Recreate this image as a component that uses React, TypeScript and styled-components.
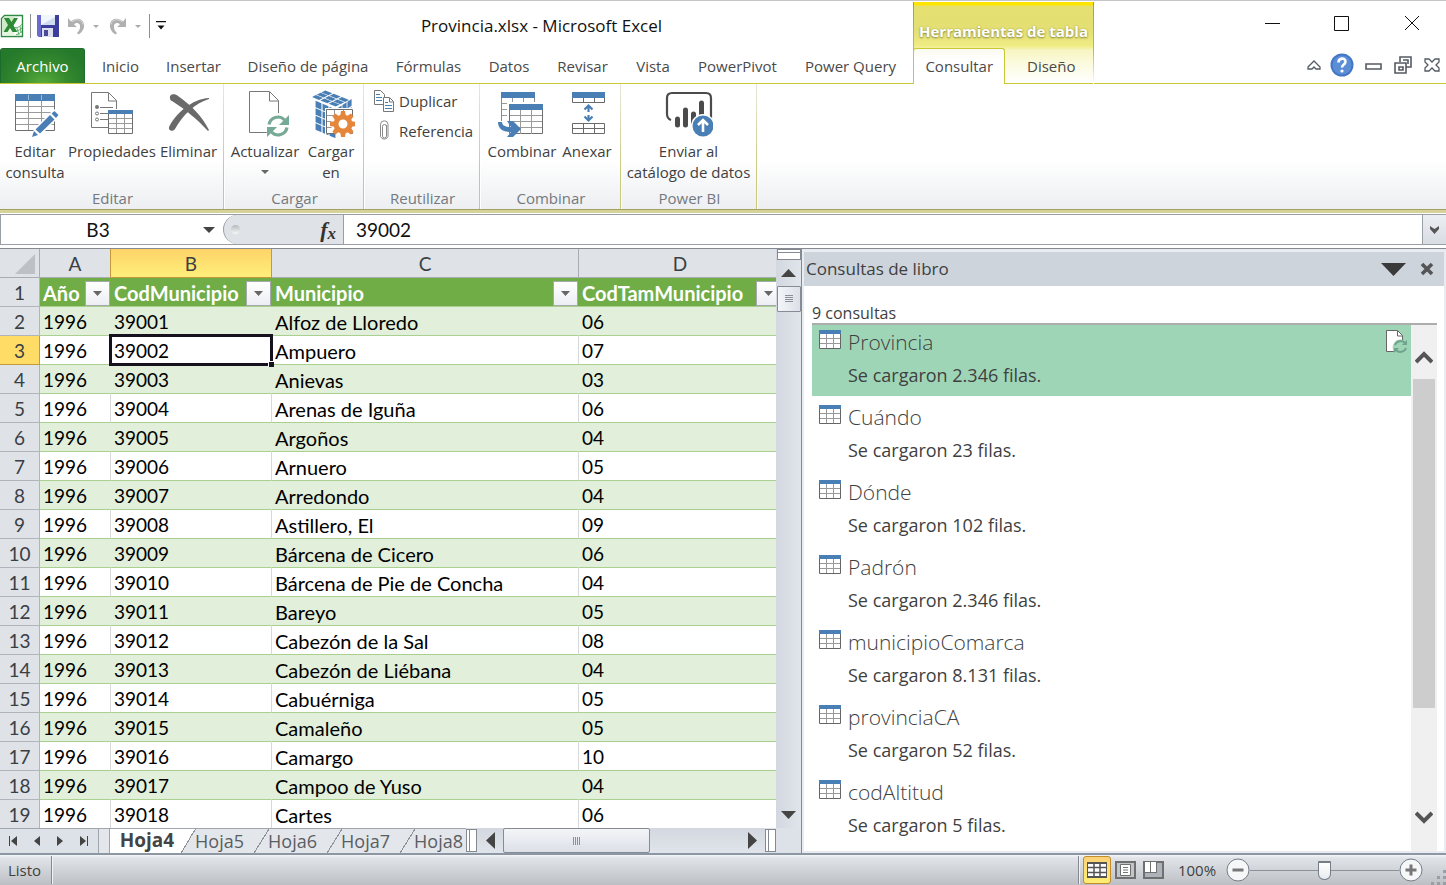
import React from "react";
import styled, { createGlobalStyle, css } from "styled-components";

const UI = `"Open Sans", "Noto Sans", sans-serif`;
const SHEET = `Lato, "Open Sans", sans-serif`;
const BLUE = "#4a7fb5";
const INK = "#3f3f3f";
const OLIVE = "#c8c832";

const GlobalStyle = createGlobalStyle`
  *, *::before, *::after { box-sizing: border-box; }
  body { margin: 0; background: #fff; font-family: ${UI}; color: ${INK}; overflow: hidden; }
  button, input { font: inherit; color: inherit; border: 0; background: none; padding: 0; margin: 0; outline: 0; }
  svg { display: block; flex: none; }
`;

const Window = styled.div`
  display: flex;
  flex-direction: column;
  height: 100vh;
  border-top: 1px solid #c6c6c8;
`;

/* ---------- title bar and tabs ---------- */

const Header = styled.header`
  display: flex;
  height: 83px;
  flex: none;
`;

const HeaderMain = styled.div`
  display: flex;
  flex-direction: column;
  width: 913px;
  flex: none;
`;

const TitleRow = styled.div`
  display: flex;
  align-items: center;
  height: 47px;
  padding-top: 3px;
`;

const QuickAccess = styled.div`
  display: flex;
  align-items: center;
  width: 170px;
  gap: 6px;
`;

const QuickButton = styled.button<{ $pad?: number }>`
  display: flex;
  align-items: center;
  gap: 8px;
  padding: 0 ${(p) => p.$pad ?? 0}px;
`;

const QuickDivider = styled.span`
  width: 1px;
  height: 24px;
  background: #8f8f8f;
`;

const WindowTitle = styled.h1`
  flex: 1;
  margin: 0;
  text-align: center;
  font-size: 17px;
  line-height: 24px;
  font-weight: 400;
  color: #111;
  white-space: pre;
`;

const TabRow = styled.nav`
  display: flex;
  height: 36px;
  border-bottom: 1px solid ${OLIVE};
`;

const RibbonTab = styled.button<{ $w: number }>`
  width: ${(p) => p.$w}px;
  font-size: 15px;
  line-height: 20px;
  white-space: nowrap;
  color: #4a4a4a;
`;

const FileTab = styled(RibbonTab)`
  color: #fff;
  margin-right: 3px;
  border: 1px solid #1b6b2c;
  border-bottom: 0;
  border-radius: 3px 3px 0 0;
  background: radial-gradient(ellipse at 50% 110%, #5cb03c 0%, #35892e 45%, #25792b 80%);
`;

const ContextGroup = styled.div`
  display: flex;
  flex-direction: column;
  width: 181px;
  flex: none;
  margin-top: 1px;
  border: solid;
  border-width: 0 1px;
  border-image: linear-gradient(#a8a02c, #c4bc40 60%, #fff) 1;
  background: linear-gradient(#ffe400 0, #ffe400 3px, #e5e070 4px, #e3df74 28px, #efec84 44px, #f7f5c0 48px, #fbfadc 60px, #fff 81px);
`;

const ContextTitle = styled.div`
  height: 46px;
  padding-top: 18px;
  text-align: center;
  font-size: 15px;
  line-height: 22px;
  font-weight: 700;
  color: #fff;
  white-space: nowrap;
  text-shadow: 0 1px 2px #8d8a3c, 0 0 2px #b5b158;
`;

const ContextTabs = styled.div`
  display: flex;
  flex: 1;
`;

const ActiveTab = styled(RibbonTab)`
  margin-left: -1px;
  padding-bottom: 2px;
  border: 1px solid ${OLIVE};
  border-bottom: 0;
  border-radius: 3px 3px 0 0;
  background: linear-gradient(#fbfaf0, #fff 12px);
`;

const ContextTab = styled(RibbonTab)`
  padding-left: 4px;
  border-bottom: 1px solid ${OLIVE};
`;

const HeaderSide = styled.div`
  display: flex;
  flex-direction: column;
  flex: 1;
`;

const WindowButtons = styled.div`
  display: flex;
  justify-content: flex-end;
  gap: 54px;
  height: 47px;
  padding: 14px 26px 0 0;
`;

const HelpRow = styled.div`
  display: flex;
  align-items: center;
  justify-content: flex-end;
  gap: 9px;
  height: 36px;
  padding: 0 4px 2px 0;
  border-bottom: 1px solid ${OLIVE};
`;

/* ---------- ribbon ---------- */

const Ribbon = styled.section`
  display: flex;
  height: 129px;
  flex: none;
  border-bottom: 3px solid #d5d39a;
  box-shadow: inset 0 -1px #a3a162;
  background: linear-gradient(#fff 60%, #eceef1 100%);
`;

const Group = styled.div<{ $w: number }>`
  display: flex;
  flex-direction: column;
  width: ${(p) => p.$w}px;
  margin-bottom: 1px;
  border-right: 1px solid;
  border-image: linear-gradient(#e8e8de, #c9cb7c 70%) 1;
  box-shadow: 1px 0 #fff;
`;

const GroupBody = styled.div<{ $pad?: number }>`
  display: flex;
  flex: 1;
  align-items: flex-start;
  padding: 6px 0 0 ${(p) => p.$pad ?? 0}px;
`;

const GroupName = styled.div`
  padding-left: 2px;
  text-align: center;
  font-size: 15px;
  line-height: 20px;
  height: 21px;
  color: #74797f;
`;

const BigButton = styled.button<{ $w: number }>`
  display: flex;
  flex-direction: column;
  align-items: center;
  width: ${(p) => p.$w}px;
  font-size: 15px;
  line-height: 21px;
  white-space: nowrap;
`;

const BigLabel = styled.span`
  display: block;
  margin-top: 3px;
  text-align: center;
`;

const DropMark = styled.span`
  margin-top: 8px;
  border: 4px solid transparent;
  border-top-color: #666;
  border-bottom: 0;
`;

const SmallList = styled.div`
  display: flex;
  flex-direction: column;
  gap: 8px;
`;

const SmallButton = styled.button`
  display: flex;
  align-items: center;
  gap: 4px;
  height: 22px;
  font-size: 15px;
  line-height: 20px;
`;

/* ---------- formula bar ---------- */

const FormulaBar = styled.div`
  display: flex;
  flex: none;
  height: 31px;
  margin-top: 1px;
  border: 1px solid #9a9ea5;
  border-right: 0;
  background: #fff;
  font-family: ${SHEET};
  font-size: 19px;
  color: #111;
`;

const NameBox = styled.input`
  width: 194px;
  padding-bottom: 1px;
  text-align: center;
`;

const NameArrow = styled.button`
  width: 28px;
  display: grid;
  place-items: center;
`;

const FxZone = styled.div`
  display: flex;
  align-items: center;
  justify-content: space-between;
  width: 121px;
  padding: 0 7px;
  border: 1px solid #9a9ea5;
  border-width: 0 1px;
  border-radius: 15px 0 0 15px;
  background: #dfe3e8;
`;

const FxKnob = styled.span`
  width: 9px;
  height: 9px;
  border-radius: 50%;
  background: linear-gradient(#b4b8be, #f8f8f8);
`;

const FxButton = styled.button`
  font-family: "Liberation Serif", serif;
  font-style: italic;
  font-weight: 700;
  font-size: 22px;
  line-height: 28px;
  color: #333;

  sub { font-size: 17px; line-height: 12px; vertical-align: -2px; }
`;

const FormulaInput = styled.input`
  flex: 1;
  padding: 0 0 1px 12px;
`;

const ExpandButton = styled.button`
  display: grid;
  place-items: center;
  width: 24px;
  border-left: 1px solid #9a9ea5;
  background: linear-gradient(#eceff3, #d8dce3);
`;

/* ---------- work area ---------- */

const WorkArea = styled.main`
  display: flex;
  flex: 1;
  min-height: 0;
  margin-top: 3px;
  border-top: 1px solid #868b93;
  border-bottom: 2px solid #8d96a3;
  background: #e3e7ed;
`;

const SheetPane = styled.section`
  display: flex;
  flex-direction: column;
  flex: 1;
  min-width: 0;
`;

const SheetTop = styled.div`
  display: flex;
  flex: 1;
  min-height: 0;
`;

const GridClip = styled.div`
  flex: 1;
  min-width: 0;
  overflow: hidden;
  background: #fff;
`;

const Grid = styled.table`
  width: 782px;
  table-layout: fixed;
  border-collapse: separate;
  border-spacing: 0;
  font-family: ${SHEET};
  font-size: 19px;
  line-height: 26px;
  color: #000;

  th, td { height: 29px; padding: 2px 0 0; white-space: nowrap; }
`;

const goldHead = css`
  background: linear-gradient(#fdd367, #ffef7a);
  border-color: #c69a3c;
  box-shadow: -1px 0 #c69a3c;
`;

const ColHead = styled.th<{ $on?: boolean }>`
  font-weight: 400;
  color: #3a3f45;
  background: #dfe2e7;
  border: solid #a9adb3;
  border-width: 0 1px 1px 0;
  ${(p) => p.$on && goldHead}
`;

const Corner = styled(ColHead)`
  svg { margin-left: 15px; }
`;

const RowHead = styled.th<{ $on?: boolean }>`
  font-weight: 400;
  color: #3a3f45;
  background: ${(p) => (p.$on ? "#ffdc66" : "#dfe2e7")};
  border: solid ${(p) => (p.$on ? "#c69a3c" : "#b1b5bb")};
  border-width: 0 1px 1px 0;
`;

const FieldHead = styled.th`
  background: #70ad47;
  border-bottom: 1px solid #a9d08e;
  color: #fff;
  text-align: left;
  font-size: 20px;
`;

const FieldInner = styled.div`
  display: flex;
  align-items: center;
  justify-content: space-between;
  height: 26px;
  padding: 0 1px 0 3px;
`;

const FilterButton = styled.button`
  display: grid;
  place-items: center;
  width: 25px;
  height: 25px;
  border: 1px solid #a5a9ad;
  background: linear-gradient(#fff, #eceef3);
`;

const Cell = styled.td<{ $band?: boolean; $text?: boolean }>`
  position: relative;
  font-size: ${(p) => (p.$text ? 20 : 19)}px;
  background: ${(p) => (p.$band ? "#e2efda" : "#fff")};
  border-bottom: 1px solid #a9d08e;
  border-right: 1px solid ${(p) => (p.$band ? "#e2efda" : "#d6d8da")};

  && { padding-left: 3px; }
`;

const Selection = styled.span`
  position: absolute;
  inset: -2px;
  border: 3px solid #17101f;
  z-index: 1;

  &::after {
    content: "";
    position: absolute;
    right: -4px;
    bottom: -4px;
    width: 6px;
    height: 6px;
    background: #17101f;
    border: solid #fff;
    border-width: 1px 0 0 1px;
  }
`;

const VScroll = styled.div`
  display: flex;
  flex-direction: column;
  align-items: center;
  justify-content: space-between;
  width: 25px;
  background: linear-gradient(90deg, #d3d8e0, #e0e4eb);
`;

const VScrollTop = styled.div`
  display: flex;
  flex-direction: column;
  align-items: center;
`;

const SplitHandle = styled.div`
  width: 24px;
  height: 11px;
  border: 1px solid #858990;
  background: #fff;
  box-shadow: inset 0 2px #fff, inset 0 3px #858990;
`;

const ScrollArrow = styled.button<{ $h: number }>`
  display: grid;
  place-items: center;
  width: 24px;
  height: ${(p) => p.$h}px;
`;

const VThumb = styled.div`
  display: grid;
  place-items: center;
  width: 24px;
  height: 26px;
  border: 1px solid #858c96;
  border-radius: 1px;
  background: linear-gradient(90deg, #f3f5f8, #dce0e7);
`;

const SheetBottom = styled.div`
  display: flex;
  flex: none;
  height: 25px;
  background: #dde1e8;
`;

const SheetNav = styled.div`
  display: flex;
  align-items: center;
  gap: 14px;
  width: 99px;
  padding-left: 8px;
  border-top: 1px solid #a0a5ad;
  border-right: 1px solid #a0a5ad;
`;

const SheetTabs = styled.div`
  display: flex;
  width: 367px;
  padding-left: 10px;
  overflow: hidden;
  border-top: 1px solid #a0a5ad;
  background: #e3e6ea;
`;

const SheetTab = styled.button<{ $on?: boolean }>`
  position: relative;
  flex: none;
  width: ${(p) => (p.$on ? 79 : 73)}px;
  margin-top: ${(p) => (p.$on ? -1 : 0)}px;
  padding: 0 ${(p) => (p.$on ? 4 : 10)}px 1px 0;
  text-align: center;
  font-size: ${(p) => (p.$on ? 19 : 18)}px;
  line-height: 22px;
  font-weight: ${(p) => (p.$on ? 700 : 400)};
  color: ${(p) => (p.$on ? "#444" : "#5a5e63")};
  ${(p) => p.$on && "background: #fff; border-left: 1px solid #a0a5ad;"}

  &::after {
    content: "";
    position: absolute;
    inset: 0 -8px 0 auto;
    width: 15px;
    background: linear-gradient(to bottom right, ${(p) => (p.$on ? "#fff" : "#e3e6ea")} 48%, #8d9299 48%, #8d9299 52%, #e3e6ea 52%);
  }
`;

const SheetTabText = styled.span`
  position: relative;
  z-index: 1;
`;

const SplitGrip = styled.span`
  width: 11px;
  margin: 1px 0;
  border: 1px solid #858990;
  background: #fff;
  box-shadow: inset 2px 0 #fff, inset 3px 0 #858990;
`;

const HScroll = styled.div`
  display: flex;
  flex: 1;
  align-items: stretch;
  justify-content: space-between;
  background: linear-gradient(#d3d8e0, #e0e4eb);
`;

const HArrow = styled.button`
  display: grid;
  place-items: center;
  width: 26px;
`;

const HTrack = styled.div`
  flex: 1;
`;

const HThumb = styled.div`
  display: grid;
  place-items: center;
  width: 147px;
  height: 25px;
  border: 1px solid #858c96;
  border-radius: 2px;
  background: linear-gradient(#f3f5f8, #dce0e7);
`;

const HEnd = styled.div`
  width: 25px;
`;

/* ---------- queries pane ---------- */

const QueriesPane = styled.aside`
  display: flex;
  flex-direction: column;
  width: 645px;
  flex: none;
  padding: 3px 2px 2px;
  border-left: 1px solid #858b95;
  background: #e8ebf0;
`;

const PaneHead = styled.div`
  display: flex;
  align-items: center;
  gap: 14px;
  height: 34px;
  flex: none;
  padding: 0 10px 0 2px;
  background: #cdd4dc;
`;

const PaneTitle = styled.h2`
  flex: 1;
  margin: 0;
  font-size: 17px;
  line-height: 24px;
  font-weight: 400;
`;

const PaneBody = styled.div`
  display: flex;
  flex-direction: column;
  flex: 1;
  min-height: 0;
  padding: 16px 7px 0 8px;
  background: #fff;
`;

const QueryCount = styled.p`
  margin: 0;
  height: 21px;
  font-size: 16px;
  line-height: 22px;
`;

const QueryArea = styled.div`
  display: flex;
  flex: 1;
  min-height: 0;
  border-top: 2px solid #adadad;
`;

const QueryList = styled.ul`
  flex: 1;
  margin: 0;
  padding: 0;
  list-style: none;
  overflow: hidden;
`;

const QueryItem = styled.li<{ $on?: boolean }>`
  display: flex;
  align-items: flex-start;
  gap: 7px;
  height: 71px;
  margin-bottom: 4px;
  padding: 5px 3px 0 7px;
  background: ${(p) => (p.$on ? "#9fd5b7" : "transparent")};
`;

const QueryText = styled.div`
  flex: 1;
  margin-top: -4px;
`;

const QueryName = styled.div`
  font-size: 21px;
  line-height: 32px;
  font-weight: 300;
`;

const QueryStatus = styled.div`
  font-size: 18px;
  line-height: 34px;
`;

const PaneScroll = styled.div`
  display: flex;
  flex-direction: column;
  width: 26px;
  background: #f0f0f0;
`;

const PaneScrollButton = styled.button<{ $h: number; $top?: number }>`
  display: grid;
  place-items: center;
  height: ${(p) => p.$h}px;
  padding-top: ${(p) => p.$top ?? 0}px;
  flex: none;
`;

const PaneTrack = styled.div`
  flex: 1;
  padding: 0 2px;
`;

const PaneThumb = styled.div`
  height: 81%;
  background: #cdcdcd;
`;

/* ---------- status bar ---------- */

const StatusBar = styled.footer`
  display: flex;
  align-items: center;
  flex: none;
  height: 30px;
  padding-left: 8px;
  font-size: 15px;
  line-height: 20px;
  background: linear-gradient(#f4f6f8 0, #e0e3e7 3px, #bcc0c5 100%);
`;

const StatusDivider = styled.span`
  width: 2px;
  height: 28px;
  border-left: 1px solid #85898f;
  background: #f2f3f5;
`;

const StatusText = styled.span`
  width: 43px;
`;

const StatusSpace = styled.span`
  flex: 1;
`;

const ViewButton = styled.button<{ $on?: boolean }>`
  display: grid;
  place-items: center;
  width: 28px;
  height: 28px;
  border-radius: 3px;
  ${(p) => p.$on && "margin-left: 3px; border: 1px solid #c48a2c; background: linear-gradient(#fbd277, #ffed72);"}
`;

const ZoomValue = styled.button`
  width: 59px;
  padding-left: 1px;
  text-align: center;
`;

const ZoomRange = styled.input`
  appearance: none;
  width: 149px;
  height: 22px;
  background: linear-gradient(#8b9199, #8b9199) center / 100% 1px no-repeat;

  &::-webkit-slider-thumb {
    appearance: none;
    width: 13px;
    height: 19px;
    border: 1px solid #747d88;
    border-top-width: 2px;
    border-radius: 1px 1px 6px 6px;
    background: linear-gradient(#fff, #e8ebef);
  }
`;

const SizeGrip = styled.span`
  width: 23px;
  height: 30px;
  display: flex;
  align-items: flex-end;
  justify-content: flex-end;
`;

/* ---------- icons ---------- */

const Tri = ({ dir, w, h, fill = "#444" }: { dir: "up" | "down" | "left" | "right"; w: number; h: number; fill?: string }) => {
  const points = {
    up: `0,${h} ${w},${h} ${w / 2},0`,
    down: `0,0 ${w},0 ${w / 2},${h}`,
    left: `${w},0 ${w},${h} 0,${h / 2}`,
    right: `0,0 0,${h} ${w},${h / 2}`,
  }[dir];
  return (
    <svg width={w} height={h} aria-hidden="true">
      <polygon points={points} fill={fill} />
    </svg>
  );
};

const ExcelIcon = () => (
  <svg width="24" height="24" viewBox="0 0 24 24">
    <path d="M4.500 1.500H22.500v21h-21v-18z" fill="#fff" stroke="#2f8a45" strokeWidth="1.400" />
    <path d="M2.500 5l2.500-2.500h10L13 14 2.500 18z" fill="#cdebc4" />
    <path d="M2.500 21.500V18L13 15l2 6.500z" fill="#e6f5e0" />
    <path d="M4 4h5l2.500 4L14 4h4l-4.500 7.500 4 6.500h-5L10 14l-2.500 4H3.500l4.500-7z" fill="#2f8a37" />
    <path d="M15 13.500c3 1 5-2 7-3M16 17c3 0 4-2 6-3M16 20.500c3 0 4-2 6-3M17 14l2 7M20 12l1 7" stroke="#5fb069" fill="none" />
  </svg>
);

const SaveIcon = () => (
  <svg width="22" height="22" viewBox="0 0 22 22">
    <path d="M0 0h22v22H2l-2-2z" fill="#3d3d9c" />
    <path d="M0 0h4v22H2l-2-2z" fill="#6a6ad0" />
    <rect x="4" y="0" width="14" height="10" fill="#f1f5fc" />
    <path d="M4 10L18 2v8z" fill="#cfdcf0" />
    <rect x="5" y="13" width="11" height="9" fill="#dcdff0" />
    <rect x="7" y="15" width="4" height="6" fill="#4a4a96" />
  </svg>
);

const UndoIcon = ({ flip }: { flip?: boolean }) => (
  <svg width="18" height="18" viewBox="0 0 18 18">
    <g transform={flip ? "matrix(-1 0 0 1 18 0)" : undefined}>
      <path d="M1 1v9h9L7 7.500c2.500-2.500 5.500-1.500 6 1 .5 3-1 5.500-3 7.500l1.500 1.500C15.500 15 17.500 11.500 17 7.500 16 1 9 0 4 4.500z" fill="#b0b0b0" />
      <path d="M5 4.800C9 1.500 15 2 16 7.500" fill="none" stroke="#d8d8d8" />
    </g>
  </svg>
);

const CustomizeIcon = () => (
  <svg width="10" height="10" viewBox="0 0 10 10">
    <path d="M0 .5h10" stroke="#111" strokeWidth="1.500" />
    <path d="M1.500 4.500h7L5 8.500z" fill="#111" />
  </svg>
);

const EditIcon = () => (
  <svg width="48" height="48" viewBox="0 0 48 48" fill="none">
    <path d="M4.500 4.500h39v36h-39z" fill="#fff" stroke="#6e6e6e" />
    <path d="M5 16.500h38M5 22.500h38M5 28.500h38M5 34.500h38M17.500 10v30M30.500 10v30" stroke="#9a9a9a" />
    <path d="M4 4h40v7H4z" fill={BLUE} />
    <path d="M17.500 5v5M30.500 5v5" stroke="#9bbbd9" />
    <path d="M20 48l3-9L43 19l7 6-20 20z" fill="#fff" />
    <path d="M21 47l2-6 4 4zM24.500 39.500L39 25l4.500 4.500L29 43.500zM40.500 23.500l3-2.500 4 4-2.500 3z" fill={BLUE} />
  </svg>
);

const PropertiesIcon = () => (
  <svg width="48" height="48" viewBox="0 0 48 48" fill="none">
    <path d="M20 37.500H3.500v-35h17l8 8V19M20.500 3v8h8" stroke="#777" />
    <path d="M12 17.500h13M12 23.500h8M12 29.500h8" stroke="#777" />
    <circle cx="9" cy="17" r="2" fill="#777" />
    <circle cx="9" cy="23.500" r="1.500" stroke="#777" />
    <circle cx="9" cy="29.500" r="1.500" stroke="#777" />
    <path d="M20.500 20.500h24v23h-24z" fill="#fff" stroke="#6e6e6e" />
    <path d="M21 28.500h23M21 33.500h23M21 38.500h23M28.500 24v19M36.500 24v19" stroke="#9a9a9a" />
    <path d="M20 20h25v4H20z" fill={BLUE} />
  </svg>
);

const DeleteIcon = () => (
  <svg width="48" height="48" viewBox="0 0 48 48" fill="#6a6a6a">
    <path d="M5 8c-1-4 5-5 8-2 13 9 24 20 31 34l-1 1C33 30 20 19 7 11c-1 0-2-1-2-3z" />
    <path d="M4 37c-1 4 4 5 6 2C17 26 30 13 44 9V8C27 9 11 23 4 37z" />
  </svg>
);

const Refresh = ({ x, y, s }: { x: number; y: number; s: number }) => (
  <g transform={`translate(${x} ${y}) scale(${s})`}>
    <circle r="13" fill="#fff" />
    <path d="M-9-1.500A9 9 0 0 1 6.500-6M9 1.500A9 9 0 0 1-6.500 6" fill="none" stroke="#76a996" strokeWidth="3.200" />
    <path d="M11-11v10H1zM-11 11V1h10z" fill="#76a996" />
  </g>
);

const RefreshPageIcon = () => (
  <svg width="48" height="48" viewBox="0 0 48 48" fill="none">
    <path d="M8.500 1.500h20l9 9v32h-29z" fill="#fff" stroke="#777" />
    <path d="M28.500 2v9h9" stroke="#777" />
    <Refresh x={37} y={36} s={1} />
  </svg>
);

type Pt = [number, number];

/* One face of the cube: a parallelogram (origin plus two edges) cut into tiles. */
const Face = ({ o, u, v, cols, rows }: { o: Pt; u: Pt; v: Pt; cols: number; rows: number }) => {
  const at = (a: number, b: number) => `${o[0] + u[0] * a + v[0] * b},${o[1] + u[1] * a + v[1] * b}`;
  const tiles = [];
  for (let i = 0; i < cols; i++) {
    for (let j = 0; j < rows; j++) {
      const [a0, a1, b0, b1] = [(i + 0.08) / cols, (i + 0.92) / cols, (j + 0.08) / rows, (j + 0.92) / rows];
      tiles.push(<polygon key={`${i}-${j}`} points={[at(a0, b0), at(a1, b0), at(a1, b1), at(a0, b1)].join(" ")} fill={BLUE} />);
    }
  }
  return <>{tiles}</>;
};

const gearTeeth = [0, 45, 90, 135, 180, 225, 270, 315];

const LoadIcon = () => (
  <svg width="48" height="48" viewBox="0 0 48 48" fill="none">
    <Face o={[4, 7]} u={[14, -7]} v={[25, 10]} cols={3} rows={3} />
    <Face o={[8, 10]} u={[21, 9]} v={[0, 30]} cols={3} rows={4} />
    <Face o={[30, 18]} u={[15, -10]} v={[0, 24]} cols={3} rows={3} />
    <path d="M18 18h28v26H18z" fill="#fff" />
    <path d="M19.500 19.500h26v24h-26z" fill="#fff" stroke="#6e6e6e" />
    <path d="M20 25.500h25M20 31.500h25M20 37.500h25M27.500 20v23M36.500 20v23" stroke="#9a9a9a" />
    <circle cx="36" cy="34" r="12" fill="#fff" />
    <g fill="#e5863d">
      {gearTeeth.map((a) => (
        <path key={a} d="M33 27l1-6h4l1 6z" transform={`rotate(${a} 36 34)`} />
      ))}
    </g>
    <circle cx="36" cy="34" r="7" stroke="#e5863d" strokeWidth="5" fill="#fff" />
  </svg>
);

const DuplicateIcon = () => (
  <svg width="21" height="22" viewBox="0 0 21 22" fill="none">
    <path d="M.5.5h6l4 4v10H.5z" fill="#fff" stroke="#777" />
    <path d="M2 4.500h4M2 7.500h6M2 10.500h6" stroke={BLUE} />
    <path d="M9.500 7.500h6l4 4v10h-10z" fill="#fff" stroke="#777" />
    <path d="M15.500 8v4h4" stroke="#777" />
    <path d="M11 12.500h3M11 15.500h7M11 18.500h7" stroke={BLUE} />
  </svg>
);

const ClipIcon = () => (
  <svg width="21" height="22" viewBox="0 0 21 22" fill="none">
    <path d="M12.500 5v11a2 2 0 0 1-4 0M12.500 6.500a2 2 0 0 0-4 0M8.500 16V6.500M6.500 15V4.500a3.500 3.500 0 0 1 7.500 0v12a4 4 0 0 1-7.500 0V15" stroke="#8a8a8a" />
  </svg>
);

const MergeIcon = () => (
  <svg width="48" height="48" viewBox="0 0 48 48" fill="none">
    <path d="M3.500 2.500h33v31h-33z" fill="#fff" stroke="#8a8a8a" />
    <path d="M4 13.500h7M4 19.500h7M4 25.500h7M14.500 7v6M25.500 7v6" stroke="#9a9a9a" />
    <path d="M3 2h34v6H3z" fill={BLUE} />
    <path d="M9 12h38v34H9z" fill="#fff" />
    <path d="M11.500 14.500h33v29h-33z" fill="#fff" stroke="#6e6e6e" />
    <path d="M12 25.500h32M12 31.500h32M12 37.500h32M22.500 20v24M33.500 20v24" stroke="#9a9a9a" />
    <path d="M11 14h34v6H11z" fill={BLUE} />
    <path d="M-2 31h12v13h-12z" fill="#fff" />
    <path d="M0 32h4c0 4 4 5 9 5l-4-6h6l8 8-8 8H9l4-5C5 42 0 39 0 32z" fill={BLUE} />
  </svg>
);

const AppendIcon = () => (
  <svg width="48" height="48" viewBox="0 0 48 48" fill="none">
    <path d="M9.500 2.500h32v10h-32zM9.500 33.500h32v10h-32zM9.500 38.500h32M20.500 7v5M31.500 7v5M20.500 34v10M31.500 34v10" stroke="#6a6a6a" />
    <path d="M9 2h33v6H9z" fill={BLUE} />
    <path d="M25.500 16v6M25.500 25v5M21.500 19.500l4-4 4 4M21.500 26.500l4 4 4-4" stroke={BLUE} strokeWidth="2.200" />
  </svg>
);

const PowerBiIcon = () => (
  <svg width="48" height="48" viewBox="0 0 48 48" fill="none">
    <path d="M6 30c-3-1-4-3-4-6V8c0-3 2-5 5-5h34c4 0 5 2 5 5v21" stroke="#4b4b4b" strokeWidth="2.200" />
    <path d="M12.500 29v6M20.500 20v15M28.500 24v11M36.500 13v16" stroke="#4b4b4b" strokeWidth="5" strokeLinecap="round" />
    <circle cx="38" cy="36" r="12" fill="#fff" />
    <circle cx="38" cy="36" r="10.500" fill={BLUE} />
    <path d="M38 42V31M33 35l5-5 5 5" stroke="#fff" strokeWidth="2.600" />
  </svg>
);

const TableIcon = () => (
  <svg width="22" height="20" viewBox="0 0 22 20" fill="none">
    <path d="M.5.5h21v18H.5z" fill="#fff" stroke="#666" />
    <path d="M1 8.500h20M1 13.500h20M7.500 4v14M14.500 4v14" stroke="#999" />
    <path d="M0 0h22v4H0z" fill={BLUE} />
  </svg>
);

const LoadedIcon = () => (
  <svg width="22" height="24" viewBox="0 0 22 24" fill="none">
    <path d="M.5.5h11l5 5v16H.5z" fill="#fff" stroke="#666" />
    <path d="M11.500 1v5h5" stroke="#666" />
    <path d="M8 22a8 8 0 0 1 9-12l4 2v10z" fill="#9fd5b7" />
    <path d="M9 15a6 6 0 0 1 10-2M20 18a6 6 0 0 1-10 2" stroke="#6fa38d" strokeWidth="2" />
    <path d="M21 10v5h-5zM8 23v-5h5z" fill="#6fa38d" />
  </svg>
);

const HelpIcon = () => (
  <svg width="24" height="24" viewBox="0 0 24 24">
    <circle cx="12" cy="12" r="11.500" fill="#4377c6" />
    <circle cx="12" cy="12" r="9.500" fill="#5c8ed6" />
    <path d="M8.500 9.500c0-5 7-5 7-1 0 3-3.500 3-3.500 6" fill="none" stroke="#fff" strokeWidth="2.600" />
    <circle cx="12" cy="18" r="1.600" fill="#fff" />
  </svg>
);

/* ---------- data ---------- */

const TABS: [string, number][] = [
  ["Inicio", 65], ["Insertar", 81], ["Diseño de página", 148], ["Fórmulas", 93], ["Datos", 68],
  ["Revisar", 79], ["Vista", 62], ["PowerPivot", 107], ["Power Query", 119],
];

const FIELDS = ["Año", "CodMunicipio", "Municipio", "CodTamMunicipio"];

const ROWS: [string, string][] = [
  ["Alfoz de Lloredo", "06"], ["Ampuero", "07"], ["Anievas", "03"], ["Arenas de Iguña", "06"],
  ["Argoños", "04"], ["Arnuero", "05"], ["Arredondo", "04"], ["Astillero, El", "09"],
  ["Bárcena de Cicero", "06"], ["Bárcena de Pie de Concha", "04"], ["Bareyo", "05"],
  ["Cabezón de la Sal", "08"], ["Cabezón de Liébana", "04"], ["Cabuérniga", "05"],
  ["Camaleño", "05"], ["Camargo", "10"], ["Campoo de Yuso", "04"], ["Cartes", "06"],
];

const QUERIES: [string, string][] = [
  ["Provincia", "2.346"], ["Cuándo", "23"], ["Dónde", "102"], ["Padrón", "2.346"],
  ["municipioComarca", "8.131"], ["provinciaCA", "52"], ["codAltitud", "5"],
];

const SHEETS = ["Hoja4", "Hoja5", "Hoja6", "Hoja7", "Hoja8"];

/* ---------- parts ---------- */

const TitleBar = () => (
  <Header>
    <HeaderMain>
      <TitleRow>
        <QuickAccess>
          <ExcelIcon />
          <QuickDivider />
          <QuickButton aria-label="Guardar"><SaveIcon /></QuickButton>
          <QuickButton aria-label="Deshacer" $pad={2}>
            <UndoIcon />
            <Tri dir="down" w={6} h={3} fill="#aaa" />
          </QuickButton>
          <QuickButton aria-label="Rehacer" $pad={2}>
            <UndoIcon flip />
            <Tri dir="down" w={6} h={3} fill="#aaa" />
          </QuickButton>
          <QuickDivider />
          <QuickButton aria-label="Personalizar"><CustomizeIcon /></QuickButton>
        </QuickAccess>
        <WindowTitle>Provincia.xlsx - Microsoft Excel</WindowTitle>
      </TitleRow>
      <TabRow>
        <FileTab $w={85}>Archivo</FileTab>
        {TABS.map(([name, w]) => <RibbonTab key={name} $w={w}>{name}</RibbonTab>)}
      </TabRow>
    </HeaderMain>
    <ContextGroup>
      <ContextTitle>Herramientas de tabla</ContextTitle>
      <ContextTabs>
        <ActiveTab $w={93}>Consultar</ActiveTab>
        <ContextTab $w={88}>Diseño</ContextTab>
      </ContextTabs>
    </ContextGroup>
    <HeaderSide>
      <WindowButtons>
        <svg width="16" height="16"><path d="M1 8.500h15" stroke="#111" /></svg>
        <svg width="16" height="16"><path d="M.5 1.500h14v14H.5z" stroke="#111" fill="none" /></svg>
        <svg width="16" height="16"><path d="M1 1l14 14M15 1L1 15" stroke="#111" fill="none" /></svg>
      </WindowButtons>
      <HelpRow>
        <svg width="14" height="12" fill="none" stroke="#555b63" strokeWidth="1.300"><path d="M1 8l6-6 6 6v2H9L7 8l-2 2H1z" /></svg>
        <HelpIcon />
        <svg width="22" height="12" fill="none" stroke="#555b63" strokeWidth="1.600"><path d="M3 5h15v5H3z" /></svg>
        <svg width="19" height="18" fill="none" stroke="#555b63" strokeWidth="1.600"><path d="M6 6V1h11v10h-5M1 7h11v10H1zM5 11h4v3H5zM9 4h5v4" /></svg>
        <svg width="20" height="16" fill="none" stroke="#555b63" strokeWidth="1.300"><path d="M3 2h4l3 3 3-3h4v3l-3 3 3 3v3h-4l-3-3-3 3H3v-3l3-3-3-3z" /></svg>
      </HelpRow>
    </HeaderSide>
  </Header>
);

const Big = ({ w, icon, children }: { w: number; icon: React.ReactNode; children: React.ReactNode }) => (
  <BigButton $w={w}>
    {icon}
    {children}
  </BigButton>
);

const RibbonBar = () => (
  <Ribbon>
    <Group $w={224}>
      <GroupBody>
        <Big w={70} icon={<EditIcon />}><BigLabel>Editar<br />consulta</BigLabel></Big>
        <Big w={84} icon={<PropertiesIcon />}><BigLabel>Propiedades</BigLabel></Big>
        <Big w={69} icon={<DeleteIcon />}><BigLabel>Eliminar</BigLabel></Big>
      </GroupBody>
      <GroupName>Editar</GroupName>
    </Group>
    <Group $w={140}>
      <GroupBody $pad={5}>
        <Big w={72} icon={<RefreshPageIcon />}><BigLabel>Actualizar</BigLabel><DropMark /></Big>
        <Big w={60} icon={<LoadIcon />}><BigLabel>Cargar<br />en</BigLabel></Big>
      </GroupBody>
      <GroupName>Cargar</GroupName>
    </Group>
    <Group $w={116}>
      <GroupBody $pad={10}>
        <SmallList>
          <SmallButton><DuplicateIcon />Duplicar</SmallButton>
          <SmallButton><ClipIcon />Referencia</SmallButton>
        </SmallList>
      </GroupBody>
      <GroupName>Reutilizar</GroupName>
    </Group>
    <Group $w={141}>
      <GroupBody $pad={5}>
        <Big w={74} icon={<MergeIcon />}><BigLabel>Combinar</BigLabel></Big>
        <Big w={56} icon={<AppendIcon />}><BigLabel>Anexar</BigLabel></Big>
      </GroupBody>
      <GroupName>Combinar</GroupName>
    </Group>
    <Group $w={136}>
      <GroupBody>
        <Big w={135} icon={<PowerBiIcon />}><BigLabel>Enviar al<br />catálogo de datos</BigLabel></Big>
      </GroupBody>
      <GroupName>Power BI</GroupName>
    </Group>
  </Ribbon>
);

const Spreadsheet = () => (
  <GridClip>
    <Grid>
      <colgroup>
        <col style={{ width: 40 }} />
        <col style={{ width: 71 }} />
        <col style={{ width: 161 }} />
        <col style={{ width: 307 }} />
        <col style={{ width: 203 }} />
      </colgroup>
      <thead>
        <tr>
          <Corner aria-label="Seleccionar todo">
            <svg width="20" height="20"><path d="M20 0v20H0z" fill="#bcc1c6" /></svg>
          </Corner>
          {["A", "B", "C", "D"].map((c) => <ColHead key={c} $on={c === "B"}>{c}</ColHead>)}
        </tr>
        <tr>
          <RowHead>1</RowHead>
          {FIELDS.map((f) => (
            <FieldHead key={f}>
              <FieldInner>
                {f}
                <FilterButton aria-label={`Filtrar ${f}`}><Tri dir="down" w={9} h={5} fill="#666" /></FilterButton>
              </FieldInner>
            </FieldHead>
          ))}
        </tr>
      </thead>
      <tbody>
        {ROWS.map(([name, size], i) => {
          const band = i % 2 === 0;
          return (
            <tr key={name}>
              <RowHead $on={i === 1}>{i + 2}</RowHead>
              <Cell $band={band}>1996</Cell>
              <Cell $band={band}>{39001 + i}{i === 1 && <Selection />}</Cell>
              <Cell $band={band} $text>{name}</Cell>
              <Cell $band={band}>{size}</Cell>
            </tr>
          );
        })}
      </tbody>
    </Grid>
  </GridClip>
);

const SheetFooter = () => (
  <SheetBottom>
    <SheetNav>
      <button aria-label="Primera hoja"><svg width="10" height="10"><path d="M1.500 0v10" stroke="#444" /><path d="M9 0v10L3 5z" fill="#444" /></svg></button>
      <button aria-label="Hoja anterior"><svg width="10" height="10"><path d="M8 0v10L2 5z" fill="#444" /></svg></button>
      <button aria-label="Hoja siguiente"><svg width="10" height="10"><path d="M1 0v10l6-5z" fill="#444" /></svg></button>
      <button aria-label="Última hoja"><svg width="10" height="10"><path d="M7.500 0v10" stroke="#444" /><path d="M0 0v10l6-5z" fill="#444" /></svg></button>
    </SheetNav>
    <SheetTabs>
      {SHEETS.map((s, i) => <SheetTab key={s} $on={i === 0}><SheetTabText>{s}</SheetTabText></SheetTab>)}
    </SheetTabs>
    <SplitGrip />
    <HScroll>
      <HArrow aria-label="Desplazar a la izquierda"><Tri dir="left" w={9} h={17} /></HArrow>
      <HTrack>
        <HThumb><svg width="8" height="8"><path d="M.5 0v8M2.500 0v8M4.500 0v8M6.500 0v8" stroke="#8a9098" /></svg></HThumb>
      </HTrack>
      <HArrow aria-label="Desplazar a la derecha"><Tri dir="right" w={9} h={17} /></HArrow>
    </HScroll>
    <SplitGrip />
    <HEnd />
  </SheetBottom>
);

const Queries = () => (
  <QueriesPane>
    <PaneHead>
      <PaneTitle>Consultas de libro</PaneTitle>
      <Tri dir="down" w={25} h={13} fill="#3a3a3a" />
      <svg width="14" height="14"><path d="M2 2l10 10M12 2L2 12" stroke="#555" strokeWidth="3.600" /></svg>
    </PaneHead>
    <PaneBody>
      <QueryCount>9 consultas</QueryCount>
      <QueryArea>
        <QueryList>
          {QUERIES.map(([name, n], i) => (
            <QueryItem key={name} $on={i === 0}>
              <TableIcon />
              <QueryText>
                <QueryName>{name}</QueryName>
                <QueryStatus>Se cargaron {n} filas.</QueryStatus>
              </QueryText>
              {i === 0 && <LoadedIcon />}
            </QueryItem>
          ))}
        </QueryList>
        <PaneScroll>
          <PaneScrollButton $h={54} $top={10} aria-label="Subir">
            <svg width="18" height="14"><path d="M1 12l8-8 8 8" fill="none" stroke="#555" strokeWidth="4" /></svg>
          </PaneScrollButton>
          <PaneTrack><PaneThumb /></PaneTrack>
          <PaneScrollButton $h={66} aria-label="Bajar">
            <svg width="18" height="14"><path d="M1 2l8 8 8-8" fill="none" stroke="#555" strokeWidth="4" /></svg>
          </PaneScrollButton>
        </PaneScroll>
      </QueryArea>
    </PaneBody>
  </QueriesPane>
);

const Status = () => (
  <StatusBar>
    <StatusText>Listo</StatusText>
    <StatusDivider />
    <StatusSpace />
    <StatusDivider />
    <ViewButton $on aria-label="Normal">
      <svg width="20" height="16"><path d="M0 1h20v14H0z" fill="#fff" stroke="#555" strokeWidth="2" /><path d="M0 5.500h20M0 10.500h20M7 0v16M13 0v16" stroke="#555" strokeWidth="1.500" /></svg>
    </ViewButton>
    <ViewButton aria-label="Diseño de página">
      <svg width="21" height="18"><path d="M1 1h19v16H1z" fill="#c2c5c9" stroke="#6f6f6f" strokeWidth="2" /><path d="M5.500 3.500h10v11h-10z" fill="#fff" stroke="#6f6f6f" /><path d="M8 6.500h5M8 9h5M8 11.500h5" stroke="#777" /></svg>
    </ViewButton>
    <ViewButton aria-label="Salto de página">
      <svg width="21" height="18"><path d="M1 1h19v16H1z" fill="#aeb2bb" stroke="#6f6f6f" strokeWidth="2" /><path d="M2 1h11v10H2z" fill="#fff" /><path d="M7.500 1v10M13.500 1v11M2 11.500h12" stroke="#6f6f6f" /></svg>
    </ViewButton>
    <ZoomValue>100%</ZoomValue>
    <button aria-label="Alejar">
      <svg width="24" height="24"><circle cx="12" cy="12" r="11" fill="#f6f7f8" stroke="#747d88" /><path d="M6.500 12h11" stroke="#777" strokeWidth="3" /></svg>
    </button>
    <ZoomRange type="range" min={0} max={100} defaultValue={50} aria-label="Zoom" />
    <button aria-label="Acercar">
      <svg width="24" height="24"><circle cx="12" cy="12" r="11" fill="#f6f7f8" stroke="#747d88" /><path d="M6.500 12h11M12 6.500v11" stroke="#777" strokeWidth="3" /></svg>
    </button>
    <SizeGrip>
      <svg width="15" height="15" fill="#999fa7"><path d="M12 0h3v3h-3zM12 6h3v3h-3zM12 12h3v3h-3zM6 6h3v3H6zM6 12h3v3H6zM0 12h3v3H0z" /></svg>
    </SizeGrip>
  </StatusBar>
);

export default function App() {
  return (
    <Window>
      <GlobalStyle />
      <TitleBar />
      <RibbonBar />
      <FormulaBar>
        <NameBox aria-label="Cuadro de nombres" defaultValue="B3" />
        <NameArrow aria-label="Abrir nombres"><Tri dir="down" w={12} h={6} /></NameArrow>
        <FxZone>
          <FxKnob />
          <FxButton aria-label="Insertar función">f<sub>x</sub></FxButton>
        </FxZone>
        <FormulaInput aria-label="Fórmula" defaultValue="39002" />
        <ExpandButton aria-label="Expandir"><svg width="11" height="10"><path d="M1 1l4.500 3L10 1v3L5.500 9 1 4z" fill="#555" /></svg></ExpandButton>
      </FormulaBar>
      <WorkArea>
        <SheetPane>
          <SheetTop>
            <Spreadsheet />
            <VScroll>
              <VScrollTop>
                <SplitHandle />
                <ScrollArrow $h={26} aria-label="Desplazar arriba"><Tri dir="up" w={15} h={8} /></ScrollArrow>
                <VThumb><svg width="8" height="8"><path d="M0 .5h8M0 2.500h8M0 4.500h8M0 6.500h8" stroke="#8a9098" /></svg></VThumb>
              </VScrollTop>
              <ScrollArrow $h={26} aria-label="Desplazar abajo"><Tri dir="down" w={15} h={8} /></ScrollArrow>
            </VScroll>
          </SheetTop>
          <SheetFooter />
        </SheetPane>
        <Queries />
      </WorkArea>
      <Status />
    </Window>
  );
}
